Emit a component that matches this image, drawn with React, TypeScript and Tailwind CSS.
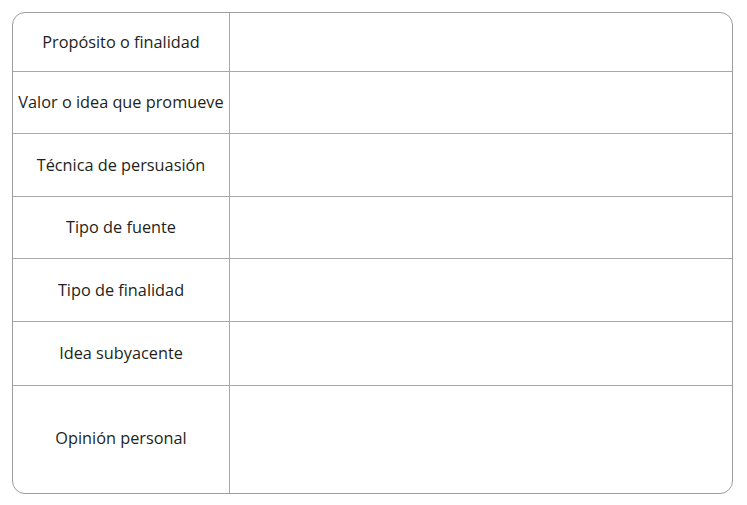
import React from "react";

const rows: { label: string; h: string }[] = [
  { label: "Propósito o finalidad", h: "h-[59px]" },
  { label: "Valor o idea que promueve", h: "h-[62px]" },
  { label: "Técnica de persuasión", h: "h-[63px]" },
  { label: "Tipo de fuente", h: "h-[62px]" },
  { label: "Tipo de finalidad", h: "h-[63px]" },
  { label: "Idea subyacente", h: "h-[64px]" },
  { label: "Opinión personal", h: "h-[107px]" },
];

export default function App() {
  return (
    <div className="w-[747px] h-[505px] bg-white pt-3 pl-3" style={{ fontFamily: '"Open Sans", "Noto Sans", sans-serif' }}>
      <div className="w-[721px] border border-[#9d9d9d] rounded-[13px] overflow-hidden">
        {rows.map((r, i) => (
          <div
            key={r.label}
            className={`flex ${r.h} ${i < rows.length - 1 ? "border-b border-[#a8a8a8]" : ""}`}
          >
            <div className={`w-[217px] shrink-0 border-r border-[#a8a8a8] flex items-center justify-center ${i === rows.length - 1 ? "pb-[4px]" : "pb-[1px]"} text-[16.3px] leading-[22px] text-[#231f20] whitespace-nowrap`}>
              {r.label}
            </div>
            <div className="flex-1" />
          </div>
        ))}
      </div>
    </div>
  );
}
